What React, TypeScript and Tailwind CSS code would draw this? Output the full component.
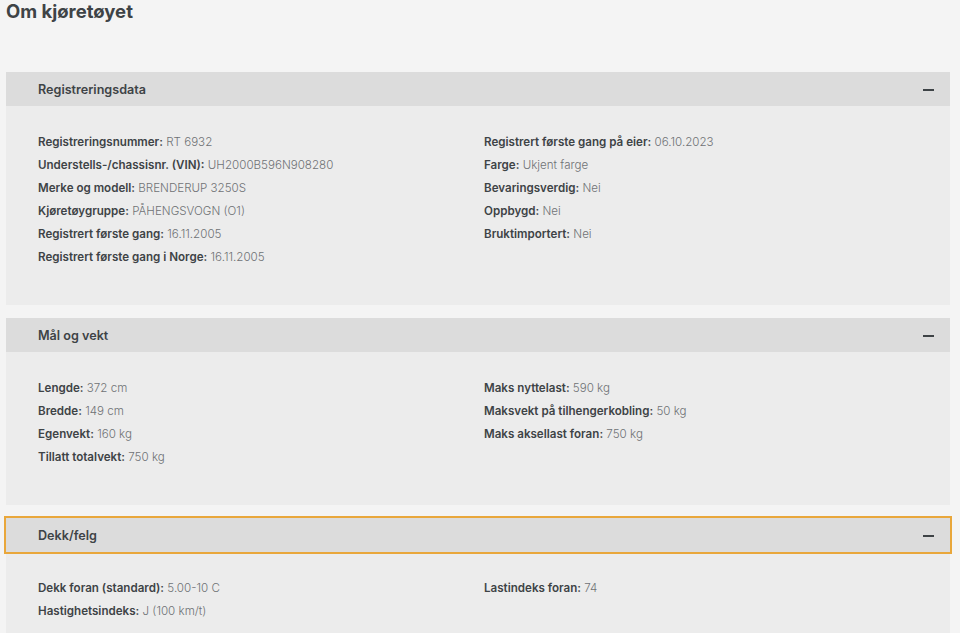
import React from "react";

type Field = { label: string; value: string };

interface SectionProps {
  title: string;
  left: Field[];
  right: Field[];
  focused?: boolean;
}

const sections: SectionProps[] = [
  {
    title: "Registreringsdata",
    left: [
      { label: "Registreringsnummer", value: "RT 6932" },
      { label: "Understells-/chassisnr. (VIN)", value: "UH2000B596N908280" },
      { label: "Merke og modell", value: "BRENDERUP 3250S" },
      { label: "Kjøretøygruppe", value: "PÅHENGSVOGN (O1)" },
      { label: "Registrert første gang", value: "16.11.2005" },
      { label: "Registrert første gang i Norge", value: "16.11.2005" },
    ],
    right: [
      { label: "Registrert første gang på eier", value: "06.10.2023" },
      { label: "Farge", value: "Ukjent farge" },
      { label: "Bevaringsverdig", value: "Nei" },
      { label: "Oppbygd", value: "Nei" },
      { label: "Bruktimportert", value: "Nei" },
    ],
  },
  {
    title: "Mål og vekt",
    left: [
      { label: "Lengde", value: "372 cm" },
      { label: "Bredde", value: "149 cm" },
      { label: "Egenvekt", value: "160 kg" },
      { label: "Tillatt totalvekt", value: "750 kg" },
    ],
    right: [
      { label: "Maks nyttelast", value: "590 kg" },
      { label: "Maksvekt på tilhengerkobling", value: "50 kg" },
      { label: "Maks aksellast foran", value: "750 kg" },
    ],
  },
  {
    title: "Dekk/felg",
    focused: true,
    left: [
      { label: "Dekk foran (standard)", value: "5.00-10 C" },
      { label: "Hastighetsindeks", value: "J (100 km/t)" },
    ],
    right: [{ label: "Lastindeks foran", value: "74" }],
  },
];

const FieldRow: React.FC<{ field: Field }> = ({ field }) => (
  <div className="h-[23px] leading-[23px] text-[11.6px] whitespace-nowrap">
    <span className="font-semibold text-[#3e4346]">{field.label}:</span>{" "}
    <span className="font-light text-[#6f7275]">{field.value}</span>
  </div>
);

const Section: React.FC<SectionProps> = ({ title, left, right, focused }) => (
  <div className="mb-[13px]">
    <div
      className={
        focused
          ? "flex items-center justify-between h-[34px] bg-[#dcdcdc] pl-8 pr-4 pt-[2px] outline-2 outline-[#e9a73b] outline-offset-0"
          : "flex items-center justify-between h-[34px] bg-[#dcdcdc] pl-8 pr-4 pt-[2px]"
      }
    >
      <span className="text-[12.6px] font-semibold text-[#3e4346]">{title}</span>
      <span className="block w-[11px] h-[2px] bg-[#3e4346]" />
    </div>
    <div className="bg-[#ececec] pl-8 pt-[25px] pb-[36px] grid grid-cols-[446px_1fr]">
      <div>
        {left.map((f) => (
          <FieldRow key={f.label} field={f} />
        ))}
      </div>
      <div>
        {right.map((f) => (
          <FieldRow key={f.label} field={f} />
        ))}
      </div>
    </div>
  </div>
);

export default function App() {
  return (
    <div
      className="min-h-[633px] bg-[#f4f4f4] px-[6px] pr-[10px]"
      style={{ fontFamily: "Inter, 'Noto Sans', sans-serif" }}
    >
      <h1 className="text-[18.5px] font-bold text-[#3e4346] leading-[22px]">
        Om kjøretøyet
      </h1>
      <div className="pt-[50px]">
        {sections.map((s) => (
          <Section key={s.title} {...s} />
        ))}
      </div>
    </div>
  );
}
